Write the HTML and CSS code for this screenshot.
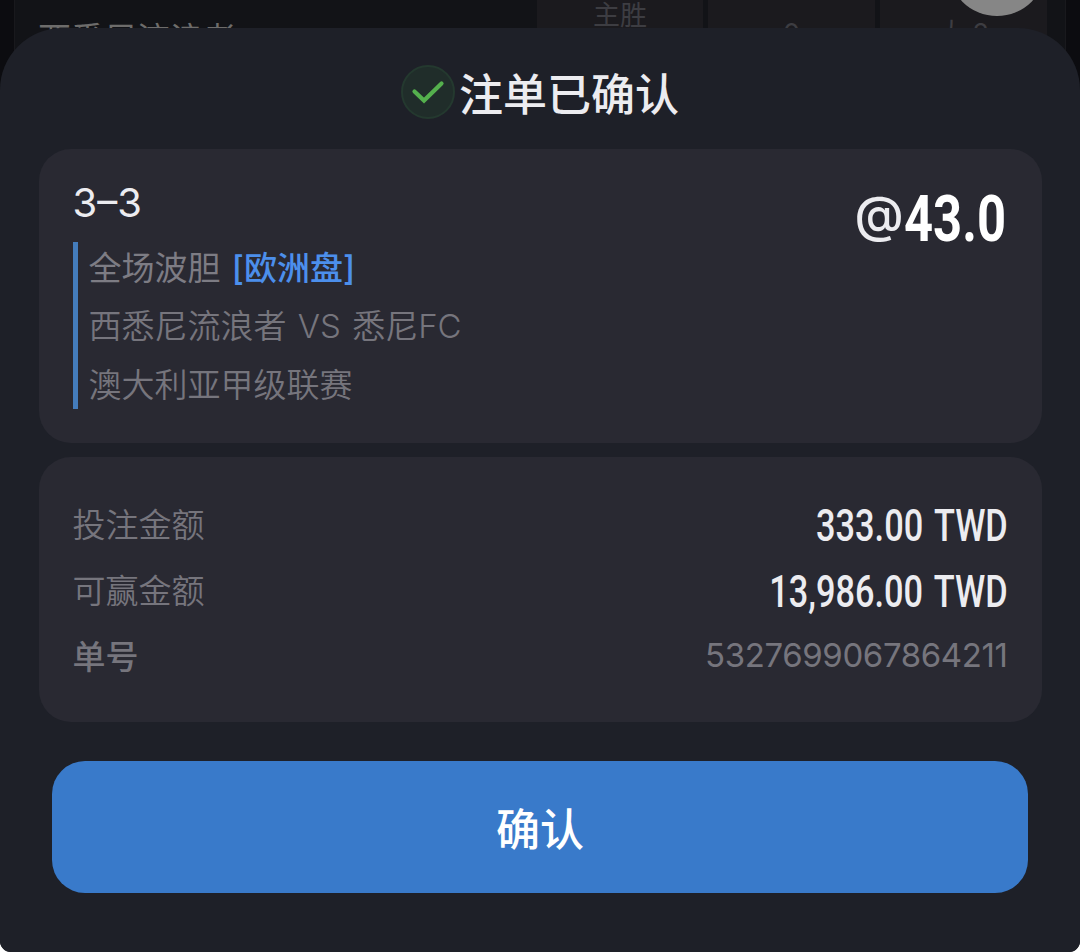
FILE: index.html
```html
<!DOCTYPE html>
<html lang="zh-CN">
<head>
<meta charset="UTF-8">
<meta name="viewport" content="width=device-width, initial-scale=1.0">
<title>注单已确认</title>
<link rel="stylesheet" href="styles.css">
</head>
<body>

<div class="page">
  <!-- Match list behind the sheet -->
  <div class="backdrop">
    <div class="match">
      <div class="match-team">西悉尼流浪者</div>
      <div class="odds">主胜</div>
      <div class="odds low">0</div>
      <div class="odds low">大 2</div>
    </div>
    <div class="float-btn"></div>
  </div>

  <div class="sheet">
    <div class="title">
      <svg class="check" viewBox="0 0 54 54">
        <circle cx="27" cy="27" r="26" fill="#202d2a" stroke="#24392f" stroke-width="2"/>
        <path d="M13.5 26.5 L23 35.5 L40.5 18.5" fill="none" stroke="#54b04d" stroke-width="4.2" stroke-linecap="round" stroke-linejoin="miter"/>
      </svg>
      <h1>注单已确认</h1>
    </div>

    <div class="card bet">
      <div class="bet-info">
        <div class="pick">3–3</div>
        <div class="detail">
          <p class="market">全场波胆 <span class="handicap">[欧洲盘]</span></p>
          <p>西悉尼流浪者 VS 悉尼FC</p>
          <p>澳大利亚甲级联赛</p>
        </div>
      </div>
      <div class="price"><span class="at">@</span><span class="price-num">43.0</span></div>
    </div>

    <div class="card summary">
      <div class="row"><span>投注金额</span><span class="amount">333.00 TWD</span></div>
      <div class="row"><span>可赢金额</span><span class="amount">13,986.00 TWD</span></div>
      <div class="row"><span class="strong">单号</span><span class="order">5327699067864211</span></div>
    </div>

    <button class="confirm">确认</button>
  </div>
</div>

</body>
</html>
```
FILE: styles.css
```css
* {
  box-sizing: border-box;
}
body {
  margin: 0;
  background-color: #fff;
  font-family: Inter, "Noto Sans CJK SC", sans-serif;
  color: #ececf0;
}
.page {
  width: 1080px;
  height: 952px;
  overflow: hidden;
  background-color: #0c0c10;
  border-radius: 0 0 11px 11px;
}
/* Dimmed page */
.backdrop {
  position: relative;
  height: 96px;
  padding: 0 14px;
  overflow: hidden;
}
.match {
  display: grid;
  grid-template-columns: 1fr 166px 167px 167px;
  column-gap: 5px;
  height: 96px;
  padding-right: 18px;
  background-color: #121317;
  border: solid #19191d;
  border-width: 0 1px;
}
.match-team {
  padding: 19px 0 0 23px;
  font-size: 33px;
  line-height: 40px;
  color: #6d6c6b;
}
.odds {
  background-color: #1b1a1e;
  color: #3d3d42;
  font-size: 27px;
  line-height: 32px;
  text-align: center;
}
.low {
  padding-top: 18px;
}
.float-btn {
  position: absolute;
  left: 948px;
  top: -82px;
  width: 98px;
  height: 98px;
  border-radius: 50%;
  background-color: #868686;
}
/* Bottom sheet */
.sheet {
  position: relative;
  height: 924px;
  margin-top: -68px;
  padding: 36px 38.5px 0;
  background-color: #1e2028;
  border-radius: 62px 62px 0 0;
}
.title {
  display: flex;
  justify-content: center;
  align-items: center;
  height: 56px;
  gap: 4px;
}
.check {
  width: 54px;
  height: 54px;
}
h1 {
  margin: 0;
  padding-top: 5px;
  font-size: 44px;
  font-weight: 500;
  line-height: 56px;
}
.card {
  background-color: #292932;
  border-radius: 32px;
  padding: 0 34px;
}
.bet {
  display: flex;
  justify-content: space-between;
  height: 294px;
  margin-top: 28.5px;
}
.pick {
  margin-top: 30px;
  font-size: 40px;
  font-weight: 400;
  line-height: 48px;
}
.detail {
  height: 167px;
  margin-top: 15.5px;
  padding-left: 11px;
  border-left: 5px solid #447cbc;
}
.detail p {
  margin: 0;
  font-size: 33px;
  font-weight: 350;
  line-height: 59px;
  height: 59px;
  word-spacing: 2px;
  color: #76757d;
}
.detail .market {
  font-weight: 400;
  line-height: 52px;
  height: 55px;
  color: #7d7c84;
}
.handicap {
  font-weight: 500;
  color: #4c8fec;
}
.price {
  display: flex;
  align-items: flex-start;
  padding-top: 39px;
}
.at {
  font-size: 50px;
  font-weight: 500;
  line-height: 52px;
}
.price-num {
  width: 104px;
  font: 700 65px/62px Roboto, sans-serif;
  color: #fff;
  transform: scaleX(0.78);
  transform-origin: left;
}
.summary {
  height: 265px;
  margin-top: 14px;
  padding-top: 33px;
}
.row {
  display: flex;
  justify-content: space-between;
  align-items: center;
  height: 66px;
  font-size: 33px;
  font-weight: 350;
  color: #76757d;
}
.strong {
  font-weight: 500;
}
.amount {
  padding-top: 7px;
  font: 500 44px/60px Roboto, sans-serif;
  word-spacing: 4px;
  color: #ececf0;
  transform: scaleX(0.78);
  transform-origin: right;
}
.order {
  font-size: 33px;
  font-weight: 400;
  letter-spacing: -0.4px;
}
.confirm {
  display: block;
  width: 976px;
  height: 132px;
  margin: 39.5px 0 0 13.5px;
  border: none;
  border-radius: 33px;
  background-color: #397aca;
  color: #fff;
  font-family: inherit;
  font-size: 44px;
  font-weight: 500;
  cursor: pointer;
}
```
